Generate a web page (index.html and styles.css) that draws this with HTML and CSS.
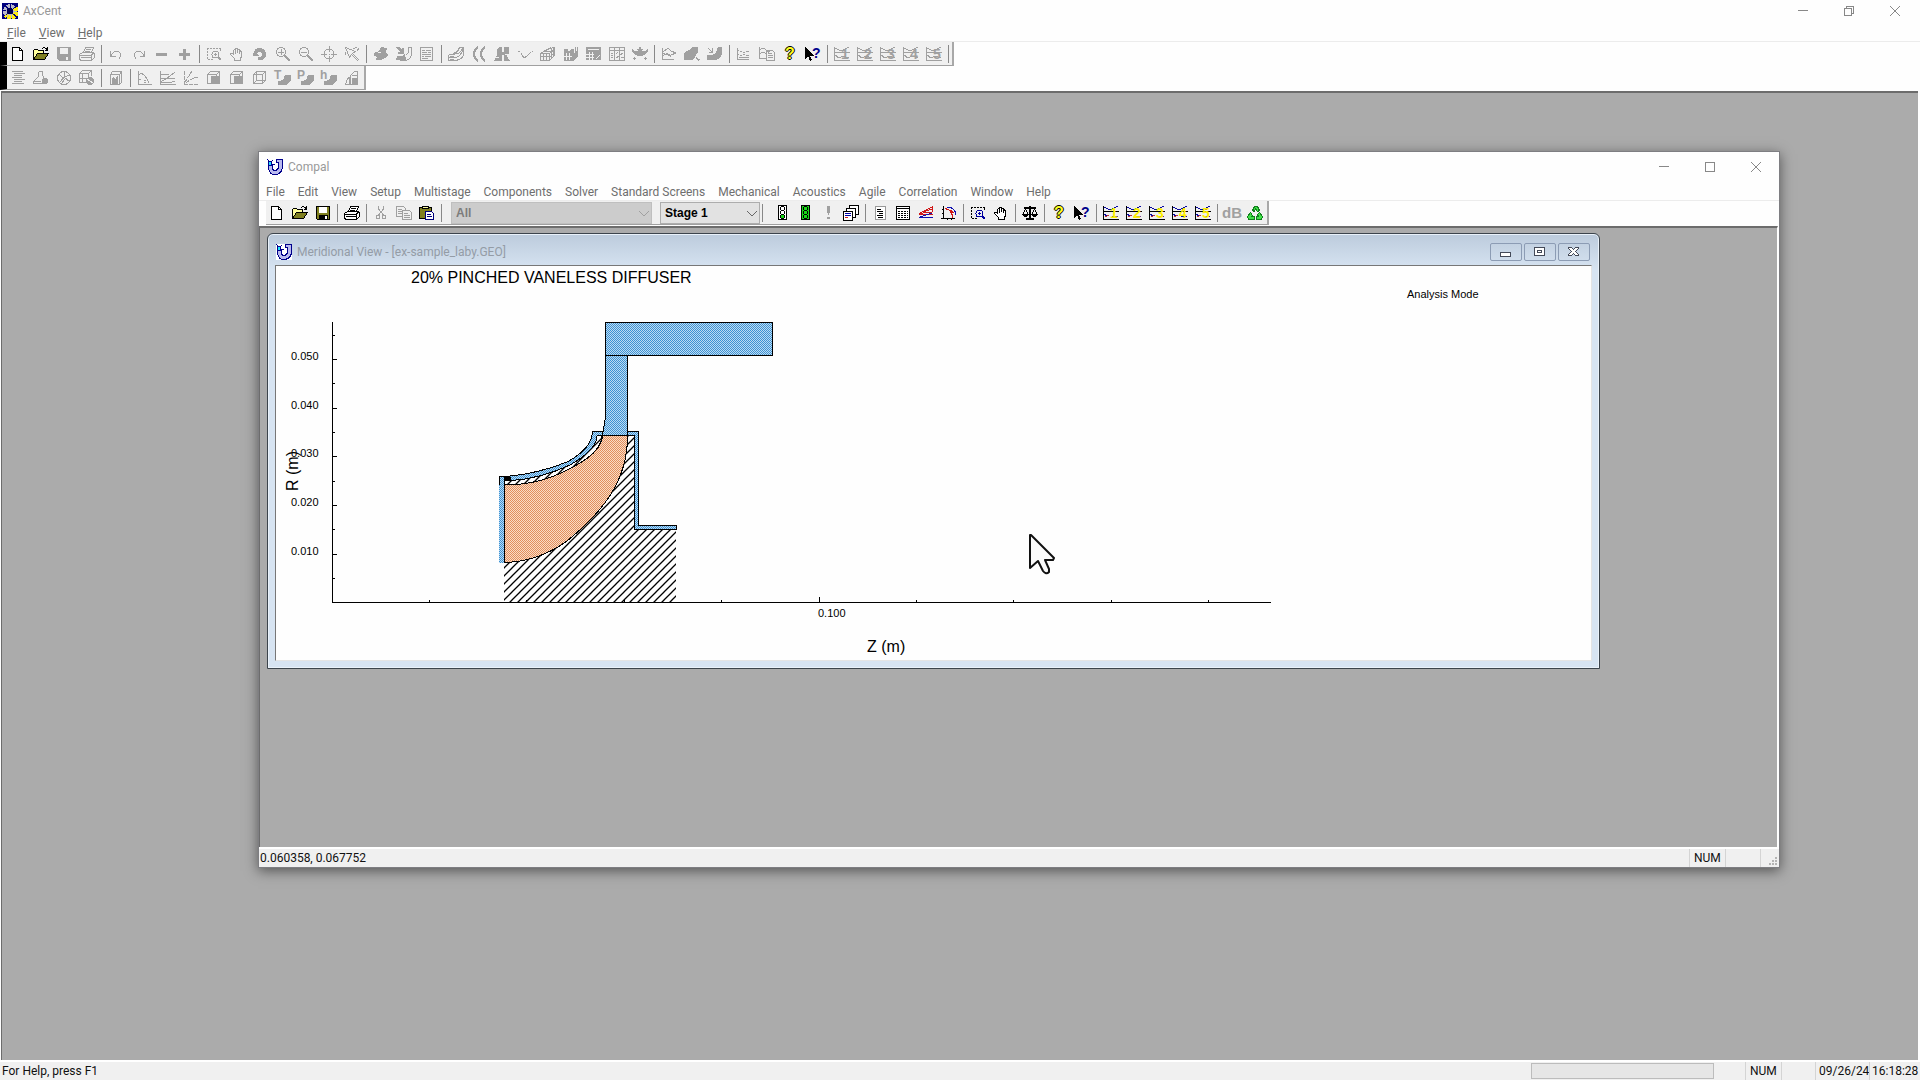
FILE: index.html
```html
<!DOCTYPE html>
<html lang="en">
<head>
  <meta charset="UTF-8" />
  <meta name="viewport" content="width=device-width, initial-scale=1.0" />
  <title>AxCent</title>
  <link rel="stylesheet" href="styles.css">
</head>
<body>

  <!-- icon set, 16x16 each -->
  <svg class="sprite" aria-hidden="true">
    <symbol id="axcent" viewBox="0 0 16 16"><path fill="#00007c" stroke="none" d="M0 0h16v16H0z"/><circle cx="8" cy="8" r="5" stroke="#b8b8c8" stroke-width="4" stroke-dasharray="3 1"/><path d="M13 5a5 5 0 0 1-9 7" stroke="#ffee10" stroke-width="5" stroke-dasharray="3 1"/><circle cx="8" cy="8" r="3" fill="#000050" stroke="none"/></symbol>
    <symbol id="compal" viewBox="0 0 16 16"><path fill="#b9b9ee" stroke="#00008b" d="M1.500 6.500v3q1 6 6 6 7 0 8-7v-8h-6v3h2v5q-1 3-4 3-2 0-2-3v-3z"/><path fill="#20e0ff" stroke="#00008b" d="M1.500 2.500h3v4h-3z"/><path stroke="#00008b" d="M.5.500l2 2M6 1l-2 2M6 5.500h2"/></symbol>
    <symbol id="new" viewBox="0 0 16 16"><path class="paper" d="M2.500 1.500h7l3 3v10h-10z"/><path d="M9.500 1.500v3h3"/></symbol>
    <symbol id="open" viewBox="0 0 16 16"><path fill="#ffff9c" d="M.5 13.500v-9l1-1h3l1 1h5v3"/><path fill="#808020" d="M.5 13.500l4-6h11l-4 6z"/><path d="M9 2.500q3-2 5 1M14.500 1v3h-3"/></symbol>
    <symbol id="save" viewBox="0 0 16 16"><path class="solid" d="M1 1h14v14H3l-2-2z"/><path fill="#f0f0f0" stroke="none" d="M4 2h8v6H4zM10 11h2v3h-2z"/></symbol>
    <symbol id="saved" viewBox="0 0 16 16"><path fill="#808020" d="M1.500 1.500h13v13h-12l-1-1z"/><path fill="#fff" stroke="none" d="M4 2h8v6H4z"/><path fill="#000" stroke="none" d="M4 10h9v4H4z"/><path fill="#fff" stroke="none" d="M10 11h2v3h-2z"/></symbol>
    <symbol id="print" viewBox="0 0 16 16"><path class="paper" d="M4.500 6.500l2-5h8l-2 5M7 3.500h5M6 5.500h5"/><path class="paper" d="M.5 8.500l3-2h11l1 2v3l-3 3h-11l-1-2z"/><path d="M.5 9.500h12v4M12 9l3-2M2 11.500h10M15.500 8v4"/></symbol>
    <symbol id="undo" viewBox="0 0 16 16"><path d="M2.500 5v5h5M3 9.500q3-5 7-4 5 2 1 7"/></symbol>
    <symbol id="redo" viewBox="0 0 16 16"><path d="M13.500 5v5h-5M13 9.500q-3-5-7-4-5 2-1 7"/></symbol>
    <symbol id="minus" viewBox="0 0 16 16"><path class="solid" d="M2 7h11v3H2z"/></symbol>
    <symbol id="plus" viewBox="0 0 16 16"><path class="solid" d="M2 7h4V3h3v4h4v3H9v4H6v-4H2z"/></symbol>
    <symbol id="zoomwin" viewBox="0 0 16 16"><path d="M1.500 2v12M1 2.500h14M14.500 3v3M2 13.500h6" stroke-dasharray="2 1"/><g class="lens"><circle cx="9.500" cy="8.500" r="3.500"/><path d="M8 8.500h3M9.500 7v3"/><path d="M12 11l3 3" stroke-width="2"/></g></symbol>
    <symbol id="hand" viewBox="0 0 16 16"><path class="paper" d="M5.500 14.500v-2l-4-4v-1h2l1 1v-4l1-1 1 1v-2h2v1h2v1l2 1v5l-1 2v2z"/><path d="M6.500 4v4M8.500 4v3M10.500 5v3"/></symbol>
    <symbol id="rotate" viewBox="0 0 16 16"><path class="solid" d="M2 7q0-5 6-5 6 1 6 6 0 6-6 6h-2v-3h3q2-2 0-5-3-1-4 2l2 2H1V7z"/></symbol>
    <symbol id="zoomin" viewBox="0 0 16 16"><circle cx="6" cy="6" r="4.500"/><path d="M3 6.500h6M6.500 3v6"/><path d="M10 10l5 5" stroke-width="2"/></symbol>
    <symbol id="zoomout" viewBox="0 0 16 16"><circle cx="6" cy="6" r="4.500"/><path d="M3 6.500h6"/><path d="M10 10l5 5" stroke-width="2"/></symbol>
    <symbol id="target" viewBox="0 0 16 16"><circle cx="8" cy="8" r="5"/><path d="M8.500 0v6M8.500 10v6M0 8.500h6M10 8.500h6M8 8.500h1"/></symbol>
    <symbol id="pick" viewBox="0 0 16 16"><path d="M1.500 1.500l10 4-3 2 6 6-1 1-6-6-2 3zM9 3l4-2M13 5l2-3M1 6l1 3"/></symbol>
    <symbol id="poly" viewBox="0 0 16 16"><path class="solid" d="M1 7l5-2 2-4 6 1-1 4 2 3-3 3-4 2H3l1-3-3-1z"/><path class="cut" d="M5 7l3-1"/></symbol>
    <symbol id="blade" viewBox="0 0 16 16"><path class="solid" d="M0 1h3l3 3V2h2v6H2V6h2zM0 14l1-4h5l3-2 1 6-2 1z"/><path d="M9.500 14.500q5-1 6-6v-7h-3v5l-3 3"/></symbol>
    <symbol id="doc" viewBox="0 0 16 16"><path d="M1.500 1.500h12v13h-12zM3 4.500h3M7 4.500h5M3 6.500h5M9 6.500h3M3 8.500h9M3 10.500h2M6 10.500h6M3 12.500h6"/></symbol>
    <symbol id="flow" viewBox="0 0 16 16"><path d="M.5 8.500h5l7-2 2-5h-3l-2 4-4 2M.5 11.500h7q6-1 8-10M.5 14.500h7q7-1 8-6v-7M.5 8.500v6M2 10.500h4M2 13.500h4"/></symbol>
    <symbol id="arcs" viewBox="0 0 16 16"><path stroke-width="2" d="M7 1q-8 7 0 14M14 1q-8 7 0 14"/></symbol>
    <symbol id="bell" viewBox="0 0 16 16"><path class="solid" d="M0 15l3-6V3l2-2h3v14zM10 1h5v6l-2 3 3 5h-6zM7 6h4v3H7z"/><path class="cut" d="M0 11.500h5M11 8.500h5"/></symbol>
    <symbol id="vee" viewBox="0 0 16 16"><path d="M1 5l2 1M4 7l3 5 3-2 4-4M15 5h1"/></symbol>
    <symbol id="mesh" viewBox="0 0 16 16"><path d="M.5 7.500h9v7h-9zM.5 10.500h9M3.500 7v7M6.500 7v7M.5 7.500l5-3 6-3M9.500 14.500l5-5v-8h-3M9 8l6-5M10 11l5-5M3 5l8 1"/><path d="M11.500 2v10M13.500 2v9"/></symbol>
    <symbol id="mesh2" viewBox="0 0 16 16"><path class="solid" d="M1 3h4l1 3 2-3h3v4l4-4v7l-5 5H1z"/><path class="cut" d="M1 10.500h8M3.500 7v7M6.500 7v7"/><path d="M12.500 1v12M14.500 1v8"/></symbol>
    <symbol id="calc" viewBox="0 0 16 16"><path class="solid" d="M0 1h15v13H0z"/><path class="cut" d="M2 3.500h11M0 8.500h8M0 11.500h8M3.500 6v8M6.500 6v8M10 13l4-4"/></symbol>
    <symbol id="table" viewBox="0 0 16 16"><path d="M.5 1.500h15v13H.5zM.5 4.500h15M5.500 1v13M10.500 1v13M2 7.500h2M2 9.500h2M2 11.500h2M7 8l2-2M7 12l7-5M12 11h3"/></symbol>
    <symbol id="wing" viewBox="0 0 16 16"><path class="solid" d="M0 3q3 3 6 2l-1-2h2V1h2v2h2l-1 2q4 1 6-2v3q-4 4-8 4T0 6z"/><path d="M1 12.500h3M2.500 11v3M12 12.500h3M13.500 11v3"/></symbol>
    <symbol id="curves" viewBox="0 0 16 16"><path d="M1.500 2v12M1 13.500h12M2 6q5-6 8-1l5 2-5 2q-4 1-8-2M2 10q5-5 8 1M3 4h2"/></symbol>
    <symbol id="duct" viewBox="0 0 16 16"><path class="solid" d="M0 14V7l5-3 3-3h6v5l-3 5-2 3z"/><path d="M12 11l3 4M13.500 13h2"/></symbol>
    <symbol id="duct2" viewBox="0 0 16 16"><path class="solid" d="M0 14V9h5l4-2 2-6h4v7l-2 4-4 2z"/><path d="M1 2l4 4M5.500 2v4h-4"/></symbol>
    <symbol id="plot" viewBox="0 0 16 16"><path d="M1.500 2v12M1 13.500h12M1 4.500h2M1 8.500h2M4 5h2M7 6h2M10 5h3M4 9h2M7 8h2M10 9h3M3 11h10"/></symbol>
    <symbol id="plotdoc" viewBox="0 0 16 16"><path d="M.5 1v11h7M1 4q3-4 6 0t4 0M1 8q3-4 6 0"/><path class="paper" d="M7.500 4.500h6l2 2v8h-8zM9 7.500h4M9 9.500h5M9 11.500h5"/></symbol>
    <symbol id="arrow" viewBox="0 0 16 16"><path fill="#000" stroke="none" d="M0 1v12l3-3 2 5 2-1-2-4h4z"/></symbol>
    <symbol id="plotn" viewBox="0 0 16 16"><path d="M.5 1v14M0 6.500h16M0 14.500h16M1 2l4 2h4l6-3M1 9l4 3 4-2 6 2"/></symbol>

    <symbol id="lines" viewBox="0 0 16 16"><path d="M2 1.500h11M4 3.500h11M4 5.500h8M2 7.500h10M4 9.500h11M4 11.500h8M2 13.500h12"/></symbol>
    <symbol id="machine" viewBox="0 0 16 16"><path d="M5.500 1.500h4v4l3 5M5.500 1.500v5l-5 5v2h9M1 11.500h7"/><circle class="solid" cx="12" cy="11" r="3"/></symbol>
    <symbol id="wheel" viewBox="0 0 16 16"><circle cx="8" cy="8" r="6.500"/><path d="M8.500 2v5l5-2M3 4l5 5M4 12l4-5 6 5M6 13l3-4"/></symbol>
    <symbol id="cubewheel" viewBox="0 0 16 16"><path d="M.5 3.500l3-3h9v5M.5 3.500h9v9h-9zM9.500 3.500l3-3M3.500 4v8M.5 8.500h9"/><circle class="solid" cx="11" cy="11" r="4"/><path class="cut" d="M8 9l6 4"/></symbol>
    <symbol id="boxed" viewBox="0 0 16 16"><path d="M2.500 4.500l2-3h9v11l-2 2h-9zM11.500 4.500v10M2.500 4.500h9l2-3"/><path class="solid" d="M4 14V9l2-3 1 4 2-4h1v8z"/></symbol>
    <symbol id="angle" viewBox="0 0 16 16"><path d="M1.500 1v13.500H15M2 5q3-3 6 1t4 7M1 9h3M7 10.500h2M7 12.500h2"/></symbol>
    <symbol id="trend" viewBox="0 0 16 16"><path d="M.5 1v14M0 14.500h16M0 8.500h15M0 4.500h9M0 12l6-3 9-7M0 12.500h9l6-1"/></symbol>
    <symbol id="trend2" viewBox="0 0 16 16"><path d="M1.500 1v14M1 14.500h14M2 12L9 1M3 13q4-4 12-6" stroke-dasharray="4 1"/></symbol>
    <symbol id="cubefront" viewBox="0 0 16 16"><path d="M1.500 4.500l3-3h9v9l-3 3M1.500 4.500h9v9h-9zM10.500 4.500l3-3"/><path class="solid" d="M5 6h9v8H5z"/></symbol>
    <symbol id="cube" viewBox="0 0 16 16"><path d="M1.500 4.500l3-3h9v9l-3 3h-9zM1.500 4.500h9v9M10.500 4.500l3-3M4.500 1.500v9h9M1.500 13.500l3-3"/></symbol>
    <symbol id="shape" viewBox="0 0 16 16"><path class="solid" d="M3 15v-4l5-1 2-5h6v5l-2 3-3 2z"/></symbol>
    <symbol id="parts" viewBox="0 0 16 16"><path d="M1.500 14.500l2-6 2-1v7zM6.500 14.500v-9l4-4h3v13zM8 5.500h5M8 8.500h6"/><path class="solid" d="M8 9h5v5H8z"/></symbol>

    <symbol id="cut" viewBox="0 0 16 16"><path d="M5.500 1v3l5 6M10.500 1v3l-5 6M8 7.500h1"/><circle cx="5" cy="12" r="2"/><circle cx="11" cy="12" r="2"/></symbol>
    <symbol id="copy" viewBox="0 0 16 16"><path class="paper" d="M.5 1.500h7l2 2v8h-9zM2 4.500h4M2 6.500h6M2 8.500h6"/><path fill="#f0f0f0" d="M6.500 5.500h7l2 2v7h-9zM8 8.500h4M8 10.500h6M8 12.500h6"/></symbol>
    <symbol id="paste" viewBox="0 0 16 16"><path fill="#808020" d="M.5 2.500h12v11H.5z"/><path fill="#f5f5a0" d="M3.500 3.500v-2h6v2z"/><path fill="#fff" stroke="#00007c" d="M6.500 6.500h6l2 2v6h-8zM8 9.500h4M8 11.500h5"/></symbol>
    <symbol id="light" viewBox="0 0 16 16"><path fill="#fff" d="M4.500.500h8v14h-8z"/><path d="M7 1.500h3M6.500 2v3M10.500 2v3M7 5.500h3M6.500 6v3M10.500 6v3M7 9.500h3M6.500 10v3M10.500 10v3M7 13.500h3"/><path fill="#18d818" stroke="none" d="M7 10h3v3H7z"/></symbol>
    <symbol id="lightgo" viewBox="0 0 16 16"><path fill="#18d818" d="M4.500.500h8v14h-8z"/><path d="M7 1.500h3M6.500 2v3M10.500 2v3M7 5.500h3M6.500 6v3M10.500 6v3M7 9.500h3M6.500 10v3M10.500 10v3M7 13.500h3"/></symbol>
    <symbol id="bang" viewBox="0 0 16 16"><path class="solid" d="M7 1h3v5l-1 4H8L7 6zM7 12h3v2H7z"/></symbol>
    <symbol id="stack" viewBox="0 0 16 16"><path fill="#fff" d="M6.500.500h9v9h-9z"/><path fill="#fff" d="M3.500 3.500h9v9h-9z"/><path fill="#fff" d="M.5 6.500h9v9h-9z"/><path stroke="#0000a8" d="M2 8.500h6M2 10.500h6"/><path stroke="#d02020" d="M2 12.500h3"/></symbol>
    <symbol id="report" viewBox="0 0 16 16"><path fill="#fff" stroke="#999" d="M3.500 1.500h10v13h-10z"/><path d="M5 4.500h4M5 6.500h6M7 8.500h4M5 10.500h6M6 12.500h5"/></symbol>
    <symbol id="grid" viewBox="0 0 16 16"><path fill="#fff" d="M1.500 1.500h13v13h-13z"/><path d="M2 3.500h12"/><path d="M3 6.500h2M6 6.500h2M9 6.500h2M12 6.500h1M3 8.500h2M6 8.500h2M9 8.500h2M12 8.500h1M3 10.500h2M6 10.500h2M9 10.500h2M12 10.500h1M3 12.500h2M6 12.500h2M9 12.500h2M12 12.500h1"/></symbol>
    <symbol id="prism" viewBox="0 0 16 16"><path stroke="#d01818" d="M1 8.500L14.500 2v5L1 8.500M1 9.500h14M5 7l9-3"/><path stroke="#1010b0" d="M1 12.500h14M2 12l12-4"/></symbol>
    <symbol id="arcplot" viewBox="0 0 16 16"><path d="M2.500 1v13M0 13.500h14M1 4.500h2M1 8.500h2M6.500 13v2M10.500 13v2"/><path stroke="#d01818" d="M4 4q6-1 8 9M9 5l4 3"/><path stroke="#1010b0" d="M6 2q8 0 9 8"/></symbol>
    <symbol id="scale" viewBox="0 0 16 16"><path stroke-width="2" d="M8 1v13M2 3h12M4 14h8"/><path d="M3.500 4l-3 6M3.500 4l3 6M12.500 4l-3 6M12.500 4l3 6"/><path class="solid" d="M0 9h7l-2 3H2zM9 9h7l-2 3h-3z"/></symbol>
    <symbol id="ploty" viewBox="0 0 16 16"><path d="M.5 1v14M0 6.500h16M0 14.500h16"/><path stroke="#0808a0" d="M1 2l4 2h4l6-3M9 11l6 1M1 9l3 2"/><path stroke="#c03030" d="M2 12l4-2M10 4h2"/></symbol>
    <symbol id="recycle" viewBox="0 0 16 16"><path stroke="#10801c" fill="#40e048" d="M5.500 5.500l2-4h3l2 4-2 1-2-3-1 3z"/><path stroke="#10801c" fill="#40e048" d="M3.500 7.500l2 3-1 1h3v3h-6l-1-3zM12.500 7.500l3 4-1 3h-5v-3h2l-1-2z"/></symbol>
    <symbol id="chevron" viewBox="0 0 16 16"><path d="M3 6l5 5 5-5"/></symbol>

    <symbol id="min" viewBox="0 0 12 12"><path d="M1 5.500h10"/></symbol>
    <symbol id="max" viewBox="0 0 12 12"><path d="M1.500 1.500h9v9h-9z"/></symbol>
    <symbol id="restore" viewBox="0 0 12 12"><path d="M1.500 3.500h7v7h-7zM3.500 3.500v-2h7v7h-2"/></symbol>
    <symbol id="close" viewBox="0 0 12 12"><path d="M1 1l10 10M11 1L1 11"/></symbol>
    <symbol id="cmin" viewBox="0 0 14 12"><path fill="#fff" d="M1.500 6.500h10v4h-10z"/></symbol>
    <symbol id="cmax" viewBox="0 0 14 12"><path fill="#fff" d="M1.500 1.500h10v8h-10zM4.500 4.500h4v2h-4z"/></symbol>
    <symbol id="cclose" viewBox="0 0 14 12"><path fill="#fff" d="M1.500 1.500h3l2 2 2-2h3v1l-3 3 3 3v1h-3l-2-2-2 2h-3v-1l3-3-3-3z"/></symbol>
  </svg>

  <header class="titlebar">
    <svg class="ic"><use href="#axcent"/></svg>
    <h1>AxCent</h1>
    <div class="controls">
      <button aria-label="Minimize"><svg><use href="#min"/></svg></button>
      <button aria-label="Restore"><svg><use href="#restore"/></svg></button>
      <button aria-label="Close"><svg><use href="#close"/></svg></button>
    </div>
  </header>
  <nav class="menu">
    <a href="#"><u>F</u>ile</a><a href="#"><u>V</u>iew</a><a href="#"><u>H</u>elp</a>
  </nav>

  <div class="docks">
    <div class="toolbar docked">
      <button aria-label="New"><svg class="ic"><use href="#new"/></svg></button>
      <button aria-label="Open"><svg class="ic"><use href="#open"/></svg></button>
      <button disabled aria-label="Save"><svg class="ic"><use href="#save"/></svg></button>
      <button disabled aria-label="Print"><svg class="ic"><use href="#print"/></svg></button>
      <i class="sep"></i>
      <button disabled aria-label="Undo"><svg class="ic"><use href="#undo"/></svg></button>
      <button disabled aria-label="Redo"><svg class="ic"><use href="#redo"/></svg></button>
      <button disabled aria-label="Remove"><svg class="ic"><use href="#minus"/></svg></button>
      <button disabled aria-label="Add"><svg class="ic"><use href="#plus"/></svg></button>
      <i class="sep"></i>
      <button disabled aria-label="Zoom window"><svg class="ic"><use href="#zoomwin"/></svg></button>
      <button disabled aria-label="Pan"><svg class="ic"><use href="#hand"/></svg></button>
      <button disabled aria-label="Rotate"><svg class="ic"><use href="#rotate"/></svg></button>
      <button disabled aria-label="Zoom in"><svg class="ic"><use href="#zoomin"/></svg></button>
      <button disabled aria-label="Zoom out"><svg class="ic"><use href="#zoomout"/></svg></button>
      <button disabled aria-label="Center"><svg class="ic"><use href="#target"/></svg></button>
      <button disabled aria-label="Pick"><svg class="ic"><use href="#pick"/></svg></button>
      <i class="sep"></i>
      <button disabled aria-label="Solid"><svg class="ic"><use href="#poly"/></svg></button>
      <button disabled aria-label="Blade"><svg class="ic"><use href="#blade"/></svg></button>
      <button disabled aria-label="Text output"><svg class="ic"><use href="#doc"/></svg></button>
      <i class="sep"></i>
      <button disabled aria-label="Meridional"><svg class="ic"><use href="#flow"/></svg></button>
      <button disabled aria-label="Blade to blade"><svg class="ic"><use href="#arcs"/></svg></button>
      <button disabled aria-label="Thickness"><svg class="ic"><use href="#bell"/></svg></button>
      <button disabled aria-label="Angle"><svg class="ic"><use href="#vee"/></svg></button>
      <button disabled aria-label="Mesh"><svg class="ic"><use href="#mesh"/></svg></button>
      <button disabled aria-label="Mesh solid"><svg class="ic"><use href="#mesh2"/></svg></button>
      <button disabled aria-label="Calculate"><svg class="ic"><use href="#calc"/></svg></button>
      <button disabled aria-label="Table"><svg class="ic"><use href="#table"/></svg></button>
      <button disabled aria-label="Wing"><svg class="ic"><use href="#wing"/></svg></button>
      <i class="sep"></i>
      <button disabled aria-label="Curves"><svg class="ic"><use href="#curves"/></svg></button>
      <button disabled aria-label="Duct out"><svg class="ic"><use href="#duct"/></svg></button>
      <button disabled aria-label="Duct in"><svg class="ic"><use href="#duct2"/></svg></button>
      <i class="sep"></i>
      <button disabled aria-label="Plot"><svg class="ic"><use href="#plot"/></svg></button>
      <button disabled aria-label="Plot report"><svg class="ic"><use href="#plotdoc"/></svg></button>
      <button class="help" aria-label="Help"><b>?</b></button>
      <button class="whats" aria-label="What's this"><svg class="ic"><use href="#arrow"/></svg><b>?</b></button>
      <i class="sep"></i>
      <button disabled class="num"><svg class="ic"><use href="#plotn"/></svg><b>1</b></button>
      <button disabled class="num"><svg class="ic"><use href="#plotn"/></svg><b>2</b></button>
      <button disabled class="num"><svg class="ic"><use href="#plotn"/></svg><b>3</b></button>
      <button disabled class="num"><svg class="ic"><use href="#plotn"/></svg><b>4</b></button>
      <button disabled class="num"><svg class="ic"><use href="#plotn"/></svg><b>5</b></button>
      <i class="sep"></i>
    </div>
    <div class="toolbar docked">
      <button disabled aria-label="List"><svg class="ic"><use href="#lines"/></svg></button>
      <button disabled aria-label="Machine"><svg class="ic"><use href="#machine"/></svg></button>
      <button disabled aria-label="Wheel"><svg class="ic"><use href="#wheel"/></svg></button>
      <button disabled aria-label="Volume"><svg class="ic"><use href="#cubewheel"/></svg></button>
      <i class="sep"></i>
      <button disabled aria-label="Boxed view"><svg class="ic"><use href="#boxed"/></svg></button>
      <i class="sep"></i>
      <button disabled aria-label="Angle plot"><svg class="ic"><use href="#angle"/></svg></button>
      <button disabled aria-label="Trend"><svg class="ic"><use href="#trend"/></svg></button>
      <button disabled aria-label="Map"><svg class="ic"><use href="#trend2"/></svg></button>
      <button disabled aria-label="Front"><svg class="ic"><use href="#cubefront"/></svg></button>
      <button disabled aria-label="Side"><svg class="ic"><use href="#cubefront"/></svg></button>
      <button disabled aria-label="Wireframe"><svg class="ic"><use href="#cube"/></svg></button>
      <button disabled class="letter"><svg class="ic"><use href="#shape"/></svg><b>T</b></button>
      <button disabled class="letter"><svg class="ic"><use href="#shape"/></svg><b>P</b></button>
      <button disabled class="letter"><svg class="ic"><use href="#shape"/></svg><b>h</b></button>
      <button disabled aria-label="Parts"><svg class="ic"><use href="#parts"/></svg></button>
    </div>
  </div>

  <main class="workspace">
    <section class="window">
      <header class="titlebar">
        <svg class="ic"><use href="#compal"/></svg>
        <h2>Compal</h2>
        <div class="controls">
          <button aria-label="Minimize"><svg><use href="#min"/></svg></button>
          <button aria-label="Maximize"><svg><use href="#max"/></svg></button>
          <button aria-label="Close"><svg><use href="#close"/></svg></button>
        </div>
      </header>
      <nav class="menu">
        <a href="#">File</a><a href="#">Edit</a><a href="#">View</a><a href="#">Setup</a><a href="#">Multistage</a><a href="#">Components</a><a href="#">Solver</a><a href="#">Standard Screens</a><a href="#">Mechanical</a><a href="#">Acoustics</a><a href="#">Agile</a><a href="#">Correlation</a><a href="#">Window</a><a href="#">Help</a>
      </nav>
      <div class="docks">
        <div class="toolbar">
          <button aria-label="New"><svg class="ic"><use href="#new"/></svg></button>
          <button aria-label="Open"><svg class="ic"><use href="#open"/></svg></button>
          <button aria-label="Save"><svg class="ic"><use href="#saved"/></svg></button>
          <i class="sep"></i>
          <button aria-label="Print"><svg class="ic"><use href="#print"/></svg></button>
          <i class="sep"></i>
          <button disabled aria-label="Cut"><svg class="ic"><use href="#cut"/></svg></button>
          <button disabled aria-label="Copy"><svg class="ic"><use href="#copy"/></svg></button>
          <button aria-label="Paste"><svg class="ic"><use href="#paste"/></svg></button>
          <i class="sep"></i>
          <span class="combo wide"><select disabled aria-label="Component"><option>All</option></select><svg class="ic"><use href="#chevron"/></svg></span>
          <span class="combo"><select aria-label="Stage"><option>Stage 1</option></select><svg class="ic"><use href="#chevron"/></svg></span>
          <i class="sep"></i>
          <button class="first" aria-label="Run"><svg class="ic"><use href="#light"/></svg></button>
          <button aria-label="Run all"><svg class="ic"><use href="#lightgo"/></svg></button>
          <button disabled aria-label="Warnings"><svg class="ic"><use href="#bang"/></svg></button>
          <button aria-label="Cases"><svg class="ic"><use href="#stack"/></svg></button>
          <i class="sep"></i>
          <button aria-label="Report"><svg class="ic"><use href="#report"/></svg></button>
          <button aria-label="Grid"><svg class="ic"><use href="#grid"/></svg></button>
          <button aria-label="Triangles"><svg class="ic"><use href="#prism"/></svg></button>
          <button aria-label="Map"><svg class="ic"><use href="#arcplot"/></svg></button>
          <i class="sep"></i>
          <button aria-label="Zoom window"><svg class="ic"><use href="#zoomwin"/></svg></button>
          <button aria-label="Pan"><svg class="ic"><use href="#hand"/></svg></button>
          <i class="sep"></i>
          <button aria-label="Compare"><svg class="ic"><use href="#scale"/></svg></button>
          <i class="sep"></i>
          <button class="help" aria-label="Help"><b>?</b></button>
          <button class="whats" aria-label="What's this"><svg class="ic"><use href="#arrow"/></svg><b>?</b></button>
          <i class="sep"></i>
          <button class="num"><svg class="ic"><use href="#ploty"/></svg><b>1</b></button>
          <button class="num"><svg class="ic"><use href="#ploty"/></svg><b>2</b></button>
          <button class="num"><svg class="ic"><use href="#ploty"/></svg><b>3</b></button>
          <button class="num"><svg class="ic"><use href="#ploty"/></svg><b>4</b></button>
          <button class="num"><svg class="ic"><use href="#ploty"/></svg><b>5</b></button>
          <i class="sep"></i>
          <button disabled class="db">dB</button>
          <button aria-label="Refresh"><svg class="ic"><use href="#recycle"/></svg></button>
        </div>
      </div>

      <div class="mdi">
        <section class="child">
          <header class="childbar">
            <svg class="ic"><use href="#compal"/></svg>
            <h3>Meridional View - [ex-sample_laby.GEO]</h3>
            <div class="childcontrols">
              <button aria-label="Minimize"><svg><use href="#cmin"/></svg></button>
              <button aria-label="Maximize"><svg><use href="#cmax"/></svg></button>
              <button aria-label="Close"><svg><use href="#cclose"/></svg></button>
            </div>
          </header>
          <svg class="chart" viewBox="276 266 1315 394" preserveAspectRatio="xMinYMin meet" role="img" aria-label="Meridional view">
            <defs>
              <pattern id="blue" width="2" height="2" patternUnits="userSpaceOnUse"><path fill="#bcdcf4" d="M0 0h2v2H0z"/><path fill="#3f92d2" d="M0 0h1v1H0zM1 1h1v1H1z"/></pattern>
              <pattern id="orange" width="2" height="2" patternUnits="userSpaceOnUse"><path fill="#fbdcc4" d="M0 0h2v2H0z"/><path fill="#e08e5e" d="M0 0h1v1H0zM1 1h1v1H1z"/></pattern>
              <pattern id="hatch" width="8" height="8" patternUnits="userSpaceOnUse"><path class="line" d="M-1 9L9-1M-1 1l2-2M7 9l2-2"/></pattern>
            </defs>

            <!-- hub and shroud metal -->
            <path fill="url(#hatch)" d="M627 435H635V529H676V602H504V562C527 562 549 554 567 541C603 512 628 480 627 435z"/>
            <path fill="url(#hatch)" class="edge" d="M504 481C532 480 551 474 570 465C586 456 597 446 597 435H602C602 448 588 460 567 470C550 479 530 485 504 485z"/>

            <!-- flow path -->
            <path fill="url(#orange)" class="edge" d="M504.500 485C530 485 550 479 567 470C588 460 602 448 602.500 435.500H627.500C628 480 603 512 567 541C549 554 527 562 504.500 562.500z"/>
            <path fill="url(#blue)" class="edge" d="M605.500 355.500H627.500V435.500H602.500L605.500 417z"/>
            <path fill="url(#blue)" class="edge" d="M605.500 322.500H772.500V355.500H605.500z"/>

            <!-- cover and disk leakage cavities -->
            <path fill="url(#blue)" d="M499 477h5v86h-5z"/>
            <path fill="url(#blue)" class="edge" d="M504.500 476.500C526 475 547 470 567 462C582 454 592 444 592.500 431.500H602.500V435.500H597C597 446 586 456 570 465C551 474 532 480 504.500 481z"/>
            <path fill="url(#blue)" class="edge" d="M627.500 431.500H638.500V525.500H676.500V529.500H634.500V435.500H627.500z"/>
            <path class="edge" d="M499.500 485V476.500H505"/>
            <path fill="#000" d="M504 477h7v4h-7z"/>

            <!-- axes -->
            <path class="edge" d="M332.500 322V602.500H1271M332 359.500h5M332 408.500h5M332 456.500h5M332 505.500h5M332 554.500h5M332 335.500h3M332 383.500h3M332 432.500h3M332 481.500h3M332 529.500h3M332 578.500h3M429.500 602v-2M526.500 602v-2M624.500 602v-2M721.500 602v-2M819.500 602v-5M916.500 602v-2M1013.500 602v-2M1111.500 602v-2M1208.500 602v-2"/>
            <g class="small">
              <text x="291" y="360">0.050</text>
              <text x="291" y="409">0.040</text>
              <text x="291" y="457">0.030</text>
              <text x="291" y="506">0.020</text>
              <text x="291" y="555">0.010</text>
              <text x="818" y="617">0.100</text>
              <text x="1407" y="298">Analysis Mode</text>
            </g>
            <g class="large">
              <text x="411" y="283">20% PINCHED VANELESS DIFFUSER</text>
              <text x="867" y="652">Z (m)</text>
              <text transform="translate(298 491) rotate(-90)">R (m)</text>
            </g>
            <path class="pointer" d="M1030 535V568L1038 561L1043 571Q1046 575 1049 572V569L1045 560H1053L1054 558L1031 535z"/>
          </svg>
        </section>
      </div>

      <footer class="status">
        <span class="message">0.060358, 0.067752</span>
        <span class="cell key">NUM</span>
        <span class="cell blank"></span>
        <span class="cell grip"><svg viewBox="0 0 10 10"><path d="M7 1h2v2H7zM4 4h2v2H4zM7 4h2v2H7zM1 7h2v2H1zM4 7h2v2H4zM7 7h2v2H7z"/></svg></span>
      </footer>
    </section>
  </main>

  <footer class="status main-status">
    <span class="message">For Help, press F1</span>
    <span class="progress"></span>
    <span class="cell key">NUM</span>
    <span class="cell blank"></span>
    <span class="cell date">09/26/24</span>
    <span class="cell time">16:18:28</span>
  </footer>

</body>
</html>
```

FILE: styles.css
```css
* {
  box-sizing: border-box;
}

body {
  margin: 0;
  height: 100vh;
  display: flex;
  flex-direction: column;
  overflow: hidden;
  background: #fefefe;
  color: #111;
  font-family: Roboto, "Noto Sans", sans-serif;
  font-size: 12px;
}

button {
  margin: 0;
  padding: 0;
  border: none;
  background: none;
  color: #000;
  font: inherit;
}

button:disabled {
  color: #a0a0a0;
}

.sprite {
  position: absolute;
  width: 0;
  height: 0;
}

/* icons */
svg {
  display: block;
  fill: none;
  stroke: currentColor;
  shape-rendering: crispEdges;
}

.ic {
  width: 16px;
  height: 16px;
  flex: none;
}

.solid {
  fill: currentColor;
  stroke: none;
}

.cut {
  stroke: #f0f0f0;
}

button:enabled .ic {
  --paper: #fff;
  --lens: #0000a0;
}

.paper {
  fill: var(--paper, none);
}

.lens {
  stroke: var(--lens, currentColor);
}

/* title bars and menus */
.titlebar {
  display: flex;
  align-items: center;
  height: 22px;
  padding: 0 2px;
  color: #999;
}

.titlebar h1,
.titlebar h2,
.childbar h3 {
  margin: 0 0 0 5px;
  flex: 1;
  font-size: 12px;
  font-weight: normal;
}

.controls {
  display: flex;
}

.controls button {
  display: grid;
  place-items: center;
  width: 46px;
  height: 20px;
  color: #888;
}

.controls svg {
  width: 12px;
  height: 12px;
}

.menu {
  display: flex;
  height: 19px;
  padding-top: 2px;
  align-items: center;
}

.menu a {
  padding: 0 6px 0 7px;
  color: #6e6e6e;
  text-decoration: none;
  white-space: nowrap;
}

/* toolbars */
.docks {
  display: flex;
  flex-direction: column;
  align-items: flex-start;
  padding-bottom: 1px;
  border-top: 1px solid #ececec;
}

.toolbar {
  display: flex;
  align-items: center;
  height: 24px;
  background: #f0f0f0;
  border-right: 2px solid #a8a8a8;
  border-bottom: 1px solid #a0a0a0;
}

.docked {
  border-left: 7px solid #000;
}

.toolbar button {
  display: flex;
  align-items: center;
  width: 23px;
  height: 22px;
  padding-left: 3px;
}

.sep {
  width: 6px;
  height: 18px;
  margin-left: 2px;
  margin-right: -2px;
  border-left: 1px solid #888;
}

.num,
.letter,
.whats {
  position: relative;
}

.toolbar b {
  font: bold 14px/16px "Liberation Sans", Arial, sans-serif;
}

.num b,
.letter b,
.whats b {
  position: absolute;
  left: 10px;
  top: 3px;
}

.num:enabled b {
  color: #fff000;
}

.toolbar .letter b {
  left: 2px;
  top: 0;
  font-size: 12px;
}

.toolbar .help b {
  padding-left: 3px;
  color: #ffff20;
  font-size: 16px;
  text-shadow: 1px 0 #000, -1px 0 #000, 0 1px #000, 0 -1px #000;
}

.whats b {
  top: 2px;
  color: #00008b;
}

.toolbar .db {
  font: bold 15px/20px "Liberation Sans", Arial, sans-serif;
  padding-left: 1px;
}

.combo {
  position: relative;
  width: 100px;
  height: 22px;
}

.combo.wide {
  width: 201px;
  margin: 0 8px 0 6px;
}

.combo select {
  appearance: none;
  width: 100%;
  height: 100%;
  padding: 0 4px;
  border: 1px solid #adadad;
  border-radius: 0;
  background: #e2e2e2;
  color: #000;
  font: bold 12px/18px "Liberation Sans", Arial, sans-serif;
  opacity: 1;
}

.combo select:disabled {
  border-color: #bfbfbf;
  background: #cccccc;
  color: #7c7c7c;
}

.combo .ic {
  position: absolute;
  right: 1px;
  top: 3px;
  color: #555;
  width: 14px;
  pointer-events: none;
}

.combo.wide .ic {
  color: #999;
}

.toolbar .first {
  margin-left: 5px;
}

/* desktop */
.workspace {
  position: relative;
  flex: 1;
  min-height: 0;
  margin: 0 2px 0 1px;
  border-top: 2px solid #6c6c6c;
  border-left: 1px solid #6c6c6c;
  background: #ababab;
}

.window {
  position: absolute;
  left: 256px;
  top: 58px;
  width: 1522px;
  height: 717px;
  display: flex;
  flex-direction: column;
  border: 1px solid #7e7e82;
  background: #fefefe;
  box-shadow: 0 3px 12px rgba(0, 0, 0, 0.5);
}

.window > .titlebar {
  height: 29px;
  padding: 0 0 0 8px;
}

.window > .docks {
  padding-left: 7px;
}

.mdi {
  position: relative;
  flex: 1;
  margin-right: 1px;
  border: 1px solid #6c6c6c;
  border-top-width: 2px;
  border-right-color: #fff;
  border-bottom: none;
  background: #ababab;
}

.child {
  position: absolute;
  left: 7px;
  top: 5px;
  width: 1333px;
  height: 436px;
  display: flex;
  flex-direction: column;
  padding: 0 7px 7px;
  border: 1px solid #3c444c;
  border-radius: 6px 6px 0 0;
  background: linear-gradient(#bccbdc, #d7e4f2 36px);
  box-shadow: inset 0 0 0 1px #eaf2fa;
}

.childbar {
  display: flex;
  align-items: center;
  height: 31px;
  padding: 5px 2px 0 1px;
  color: #949ca6;
}

.childbar .ic {
  background: #fff;
}

.childcontrols {
  display: flex;
  gap: 2px;
}

.childcontrols button {
  display: grid;
  place-items: center;
  width: 32px;
  height: 18px;
  border: 1px solid #8c9cb4;
  border-radius: 2px;
  color: #444a58;
}

.childcontrols svg {
  width: 14px;
  height: 12px;
}

.chart {
  flex: 1;
  min-height: 0;
  width: 100%;
  border: 1px solid #777;
  border-right-color: #e4e4e4;
  border-bottom-color: #e4e4e4;
  background: #fefefe;
  stroke: none;
}

.edge {
  stroke: #000;
}

.line {
  stroke: #000;
  stroke-width: 1.3;
  shape-rendering: auto;
}

.chart text {
  fill: #000;
  font-family: "Liberation Sans", Arial, sans-serif;
}

.small {
  font-size: 11px;
}

.large {
  font-size: 16px;
}

.pointer {
  fill: #fafafa;
  stroke: #111;
  stroke-width: 2;
  stroke-linejoin: round;
  shape-rendering: auto;
}

/* status bars */
.status {
  display: flex;
  height: 20px;
  border-top: 2px solid #fff;
  background: #f0f0f0;
  line-height: 19px;
}

.message {
  flex: 1;
  padding-left: 1px;
}

.cell {
  border-left: 1px solid #d4d4d4;
  white-space: nowrap;
}

.key {
  width: 36px;
  padding-left: 4px;
}

.blank {
  width: 35px;
}

.grip {
  width: 19px;
  padding: 7px 0 0 7px;
}

.grip svg {
  width: 10px;
  height: 10px;
  fill: #b4b4b4;
  stroke: none;
}

.progress {
  width: 183px;
  margin: 1px 31px 1px 0;
  border: 1px solid #bcbcbc;
  background: #e6e6e6;
}

.main-status .message {
  padding-left: 2px;
}

.main-status .blank {
  width: 34px;
}

.date {
  width: 54px;
  padding-left: 3px;
}

.time {
  width: 51px;
  padding-left: 2px;
}
```
